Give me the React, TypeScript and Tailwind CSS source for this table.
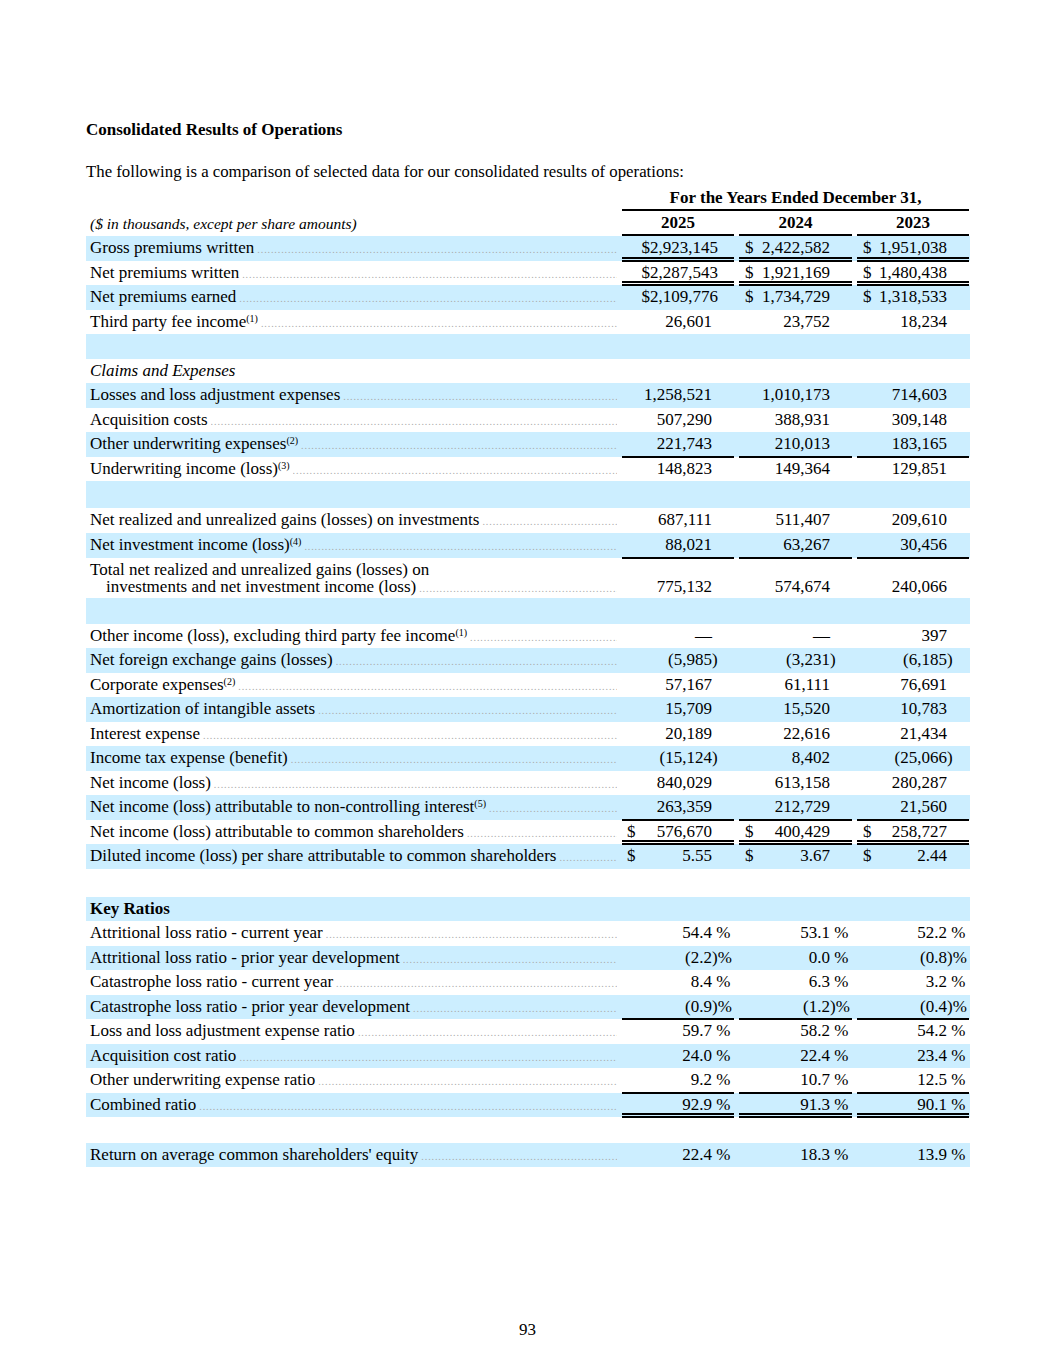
import React from 'react';

type Line = 'single' | 'double';

interface Row {
  label?: string;
  sup?: string;
  vals?: [string, string, string];
  band?: boolean;
  line?: Line;
  dollar?: 'inline' | 'split';
  italic?: boolean;
  bold?: boolean;
  noLeader?: boolean;
  total?: boolean;
  h?: string;
}

const BAND = 'bg-[#cceeff]';
const COLS = ['w-[112px]', 'w-[113px]', 'w-[112px]'];

const ROWS: Row[] = [
  { label: 'Gross premiums written', vals: ['$2,923,145', '2,422,582', '1,951,038'], band: true, line: 'double', dollar: 'inline' },
  { label: 'Net premiums written', vals: ['$2,287,543', '1,921,169', '1,480,438'], line: 'double', dollar: 'inline' },
  { label: 'Net premiums earned', vals: ['$2,109,776', '1,734,729', '1,318,533'], band: true, dollar: 'inline' },
  { label: 'Third party fee income', sup: '1', vals: ['26,601', '23,752', '18,234'] },
  { band: true },
  { label: 'Claims and Expenses', italic: true, noLeader: true },
  { label: 'Losses and loss adjustment expenses', vals: ['1,258,521', '1,010,173', '714,603'], band: true },
  { label: 'Acquisition costs', vals: ['507,290', '388,931', '309,148'] },
  { label: 'Other underwriting expenses', sup: '2', vals: ['221,743', '210,013', '183,165'], band: true, line: 'single' },
  { label: 'Underwriting income (loss)', sup: '3', vals: ['148,823', '149,364', '129,851'] },
  { band: true, h: 'h-[26.5px]' },
  { label: 'Net realized and unrealized gains (losses) on investments', vals: ['687,111', '511,407', '209,610'], h: 'h-[25px]' },
  { label: 'Net investment income (loss)', sup: '4', vals: ['88,021', '63,267', '30,456'], band: true, line: 'single', h: 'h-[25px]' },
  { total: true, vals: ['775,132', '574,674', '240,066'] },
  { band: true, h: 'h-[26px]' },
  { label: 'Other income (loss), excluding third party fee income', sup: '1', vals: ['—', '—', '397'] },
  { label: 'Net foreign exchange gains (losses)', vals: ['(5,985)', '(3,231)', '(6,185)'], band: true },
  { label: 'Corporate expenses', sup: '2', vals: ['57,167', '61,111', '76,691'] },
  { label: 'Amortization of intangible assets', vals: ['15,709', '15,520', '10,783'], band: true },
  { label: 'Interest expense', vals: ['20,189', '22,616', '21,434'] },
  { label: 'Income tax expense (benefit)', vals: ['(15,124)', '8,402', '(25,066)'], band: true },
  { label: 'Net income (loss)', vals: ['840,029', '613,158', '280,287'] },
  { label: 'Net income (loss) attributable to non-controlling interest', sup: '5', vals: ['263,359', '212,729', '21,560'], band: true, line: 'single' },
  { label: 'Net income (loss) attributable to common shareholders', vals: ['576,670', '400,429', '258,727'], dollar: 'split', line: 'double' },
  { label: 'Diluted income (loss) per share attributable to common shareholders', vals: ['5.55', '3.67', '2.44'], band: true, dollar: 'split' },
  { h: 'h-[28px]' },
  { label: 'Key Ratios', bold: true, band: true, noLeader: true },
  { label: 'Attritional loss ratio - current year', vals: ['54.4 %', '53.1 %', '52.2 %'] },
  { label: 'Attritional loss ratio - prior year development', vals: ['(2.2)%', '0.0 %', '(0.8)%'], band: true },
  { label: 'Catastrophe loss ratio - current year', vals: ['8.4 %', '6.3 %', '3.2 %'] },
  { label: 'Catastrophe loss ratio - prior year development', vals: ['(0.9)%', '(1.2)%', '(0.4)%'], band: true, line: 'single' },
  { label: 'Loss and loss adjustment expense ratio', vals: ['59.7 %', '58.2 %', '54.2 %'] },
  { label: 'Acquisition cost ratio', vals: ['24.0 %', '22.4 %', '23.4 %'], band: true },
  { label: 'Other underwriting expense ratio', vals: ['9.2 %', '10.7 %', '12.5 %'], line: 'single' },
  { label: 'Combined ratio', vals: ['92.9 %', '91.3 %', '90.1 %'], band: true, line: 'double' },
  { h: 'h-[25.5px]' },
  { label: "Return on average common shareholders' equity", vals: ['22.4 %', '18.3 %', '13.9 %'], band: true },
];

// split trailing ")" / "%" so the digits line up and the suffix hangs right
function splitVal(v: string): [string, string] {
  if (v.endsWith(')%')) return [v.slice(0, -2), ')%'];
  if (v.endsWith(' %')) return [v.slice(0, -2), '\u00a0%'];
  if (v.endsWith(')')) return [v.slice(0, -1), ')'];
  return [v, ''];
}

function Leader() {
  return (
    <span className="ml-[3px] flex-1 overflow-hidden whitespace-nowrap text-[10px] leading-none tracking-[0.9px] text-[#a8a8a8]">
      {'.'.repeat(220)}
    </span>
  );
}

function Underline({ line }: { line?: Line }) {
  if (line === 'single') return <span className="absolute inset-x-0 bottom-[-1px] h-[2px] bg-black" />;
  if (line === 'double') return <span className="absolute inset-x-0 bottom-[-1px] h-[5px] border-y-2 border-black" />;
  return null;
}

function Val({ v, i, row, align = 'items-center' }: { v: string; i: number; row: Row; align?: string }) {
  const base = `relative flex ${COLS[i]} ${i === 0 ? '' : 'ml-[5px]'} ${align} whitespace-nowrap`;
  // first column of the top rows keeps "$" glued to the figure
  if (row.dollar === 'inline' && i === 0) {
    return (
      <div className={`${base} justify-end pr-[16px]`}>
        <span>{v}</span>
        <Underline line={row.line} />
      </div>
    );
  }
  if (row.dollar === 'inline') {
    return (
      <div className={`${base} justify-between pl-[6px] pr-[22px]`}>
        <span>$</span>
        <span>{v}</span>
        <Underline line={row.line} />
      </div>
    );
  }
  if (row.dollar === 'split') {
    return (
      <div className={`${base} justify-between pr-[22px] ${i === 0 ? 'pl-[5px]' : 'pl-[6px]'}`}>
        <span>$</span>
        <span>{v}</span>
        <Underline line={row.line} />
      </div>
    );
  }
  const [num, suf] = splitVal(v);
  return (
    <div className={`${base} justify-end pr-[22px]`}>
      <span>{num}</span>
      {suf && <span className="inline-block w-0">{suf}</span>}
      <Underline line={row.line} />
    </div>
  );
}

function TableRow({ row }: { row: Row }) {
  const bg = row.band ? BAND : '';

  if (row.total) {
    return (
      <div className={`flex h-[40px] pb-[3px] leading-[17px] ${bg}`}>
        <div className="flex w-[531px] flex-col justify-end pl-[4px]">
          <span className="whitespace-nowrap">Total net realized and unrealized gains (losses) on</span>
          <div className="flex items-baseline pl-[16px]">
            <span className="whitespace-nowrap">investments and net investment income (loss)</span>
            <Leader />
          </div>
        </div>
        <div className="ml-[5px] flex">
          {row.vals!.map((v, i) => <Val key={i} v={v} i={i} row={row} align="items-end" />)}
        </div>
      </div>
    );
  }

  if (!row.label) return <div className={`${row.h ?? 'h-[24.5px]'} ${bg}`} />;

  return (
    <div className={`flex ${row.h ?? 'h-[24.5px]'} leading-[18px] ${bg}`}>
      <div className={`flex w-[531px] items-baseline self-center pl-[4px] ${row.italic ? 'italic' : ''} ${row.bold ? 'font-bold' : ''}`}>
        <span className="whitespace-nowrap">
          {row.label}
          {row.sup && <sup className="text-[10px]">({row.sup})</sup>}
        </span>
        {!row.noLeader && <Leader />}
      </div>
      {row.vals && (
        <div className="ml-[5px] flex">
          {row.vals.map((v, i) => <Val key={i} v={v} i={i} row={row} />)}
        </div>
      )}
    </div>
  );
}

export default function App() {
  return (
    <div className="min-h-[1365px] w-[1055px] bg-white font-['Liberation_Serif','Times_New_Roman',serif] text-[17px] text-black">
      <div className="ml-[86px] w-[884px] pt-[120px]">
        <h1 className="text-[17px] font-bold leading-[20px]">Consolidated Results of Operations</h1>
        <p className="mt-[22px] text-[16.8px] leading-[20px]">
          The following is a comparison of selected data for our consolidated results of operations:
        </p>

        {/* header */}
        <div className="mt-[5px] flex h-[24px] leading-[18px]">
          <div className="w-[536px]" />
          <div className="flex w-[347px] items-center justify-center border-b-2 border-black font-bold">
            For the Years Ended December 31,
          </div>
        </div>
        <div className="flex h-[25px] leading-[18px]">
          <div className="flex w-[536px] items-center pl-[4px] text-[15.5px] italic">
            ($ in thousands, except per share amounts)
          </div>
          {['2025', '2024', '2023'].map((y, i) => (
            <div key={y} className={`flex ${COLS[i]} ${i ? 'ml-[5px]' : ''} items-center justify-center border-b-2 border-black font-bold`}>
              {y}
            </div>
          ))}
        </div>

        {ROWS.map((r, i) => <TableRow key={i} row={r} />)}
      </div>

      <div className="mt-[153px] pb-[20px] text-center leading-[20px]">93</div>
    </div>
  );
}
